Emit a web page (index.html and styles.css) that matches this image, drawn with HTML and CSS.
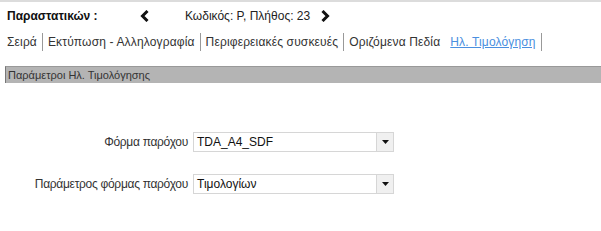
FILE: index.html
```html
<!DOCTYPE html>
<html lang="el">
<head>
    <meta charset="UTF-8">
    <title>Ηλ. Τιμολόγηση</title>
    <link rel="stylesheet" href="styles.css">
</head>
<body>
    <div class="topline"></div>
    <div class="header">
        <span class="title">Παραστατικών :</span>
        <span class="nav">
            <svg class="chev" width="10" height="12" viewBox="0 0 10 12"><path d="M7.5 1 L2.5 6 L7.5 11" fill="none" stroke="#111" stroke-width="3"/></svg>
            <span class="code">Κωδικός: Ρ, Πλήθος: 23</span>
            <svg class="chev" width="10" height="12" viewBox="0 0 10 12"><path d="M2.5 1 L7.5 6 L2.5 11" fill="none" stroke="#111" stroke-width="3"/></svg>
        </span>
    </div>
    <div class="tabs">
        <a class="tab">Σειρά</a>
        <a class="tab">Εκτύπωση - Αλληλογραφία</a>
        <a class="tab">Περιφερειακές συσκευές</a>
        <a class="tab nosep">Οριζόμενα Πεδία</a>
        <a class="tab active">Ηλ. Τιμολόγηση</a>
    </div>
    <div class="section">Παράμετροι Ηλ. Τιμολόγησης</div>
    <div class="form">
        <div class="row">
            <label>Φόρμα παρόχου</label>
            <div class="select">
                <span class="value">TDA_A4_SDF</span>
                <span class="btn"><svg width="7" height="4" viewBox="0 0 7 4"><path d="M0 0 H7 L3.5 4 Z" fill="#111"/></svg></span>
            </div>
        </div>
        <div class="row">
            <label>Παράμετρος φόρμας παρόχου</label>
            <div class="select">
                <span class="value">Τιμολογίων</span>
                <span class="btn"><svg width="7" height="4" viewBox="0 0 7 4"><path d="M0 0 H7 L3.5 4 Z" fill="#111"/></svg></span>
            </div>
        </div>
    </div>
</body>
</html>
```

FILE: styles.css
```css
body {
    margin: 0;
    background-color: white;
    font-family: "Liberation Sans", Arial, sans-serif;
    font-size: 12px;
    color: #222;
}
.topline {
    height: 2px;
    background-color: #dcdcdc;
}
.header {
    display: flex;
    align-items: center;
    height: 28px;
    padding-left: 7px;
}
.title {
    font-weight: bold;
    width: 133px;
    color: #111;
}
.nav {
    display: flex;
    align-items: center;
}
.code {
    margin-left: 35px;
    margin-right: 10px;
    color: #222;
}
.tabs {
    display: flex;
    align-items: center;
    height: 24px;
    padding-left: 7px;
}
.tab {
    padding: 0 5px;
    line-height: 18px;
    letter-spacing: 0.15px;
    border-right: 1px solid #999;
    color: #333;
}
.tab:first-child {
    padding-left: 0;
}
.tab.nosep {
    border-right: none;
}
.tab.active {
    color: #4a8fe0;
    text-decoration: underline;
}
.section {
    margin-top: 12px;
    margin-left: 5px;
    height: 16px;
    line-height: 16px;
    background-color: #b4b4b4;
    border-top: 1px solid #999;
    border-left: 1px solid #777;
    padding-left: 2px;
    font-size: 11px;
    color: #333;
}
.form {
    padding-top: 49px;
}
.row {
    display: flex;
    align-items: center;
    margin-bottom: 22px;
}
.row label {
    width: 188px;
    text-align: right;
    padding-right: 5px;
    letter-spacing: -0.3px;
    color: #333;
}
.select {
    display: flex;
    width: 199px;
    height: 18px;
    border: 1px solid #d6d6d6;
}
.select .value {
    flex: 1;
    line-height: 18px;
    padding-left: 3px;
    color: #111;
}
.select .btn {
    width: 16px;
    display: flex;
    align-items: center;
    justify-content: center;
    background-color: #f0f0f0;
    border-left: 1px solid #d6d6d6;
}
```
